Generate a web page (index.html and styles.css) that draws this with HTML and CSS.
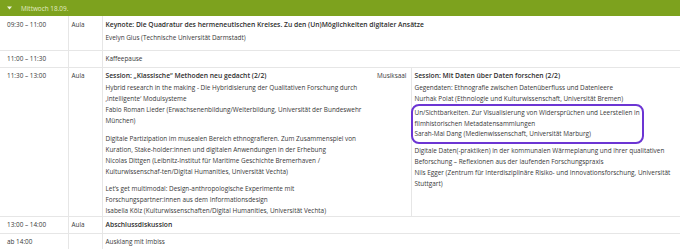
FILE: index.html
```html
<!DOCTYPE html>
<html lang="de">
<head>
<meta charset="utf-8">
<title>Programm Mittwoch</title>
<link rel="stylesheet" href="styles.css">
</head>
<body>
<div class="day">
  <div class="day-head">
    <svg class="caret" width="5" height="4" viewBox="0 0 5 4"><path d="M0 0.5H5L2.5 3.5Z" fill="#eef4dc"/></svg>
    <span>Mittwoch 18.09.</span>
  </div>
  <table class="schedule">
    <colgroup>
      <col class="c-time"><col class="c-room"><col class="c-main"><col class="c-room2"><col class="c-main2">
    </colgroup>
    <tr class="row-keynote">
      <td class="time">09:30 – 11:00</td>
      <td class="room">Aula</td>
      <td class="content" colspan="3">
        <p class="title">Keynote: Die Quadratur des hermeneutischen Kreises. Zu den (Un)Möglichkeiten digitaler Ansätze</p>
        <p class="talk">Evelyn Gius (Technische Universität Darmstadt)</p>
      </td>
    </tr>
    <tr class="row-simple">
      <td class="time">11:00 – 11:30</td>
      <td class="room"></td>
      <td class="content" colspan="3">Kaffeepause</td>
    </tr>
    <tr class="row-session">
      <td class="time">11:30 – 13:00</td>
      <td class="room">Aula</td>
      <td class="content">
        <p class="title">Session: „Klassische“ Methoden neu gedacht (2/2)</p>
        <p class="talk">Hybrid research in the making - Die Hybridisierung der Qualitativen Forschung durch<br>‚intelligente‘ Modulsysteme<br>Fabio Roman Lieder (Erwachsenenbildung/Weiterbildung, Universität der Bundeswehr<br>München)</p>
        <p class="talk">Digitale Partizipation im musealen Bereich ethnografieren. Zum Zusammenspiel von<br>Kuration, Stake-holder:innen und digitalen Anwendungen in der Erhebung<br>Nicolas Dittgen (Leibnitz-Institut für Maritime Geschichte Bremerhaven /<br>Kulturwissenschaf-ten/Digital Humanities, Universität Vechta)</p>
        <p class="talk last">Let’s get multimodal: Design-anthropologische Experimente mit<br>Forschungspartner:innen aus dem Informationsdesign<br>Isabella Kölz (Kulturwissenschaften/Digital Humanities, Universität Vechta)</p>
      </td>
      <td class="room room2">Musiksaal</td>
      <td class="content content2">
        <p class="title">Session: Mit Daten über Daten forschen (2/2)</p>
        <p class="talk">Gegendaten: Ethnografie zwischen Datenüberfluss und Datenleere<br>Nurhak Polat (Ethnologie und Kulturwissenschaft, Universität Bremen)</p>
        <p class="talk marked">Un/Sichtbarkeiten. Zur Visualisierung von Widersprüchen und Leerstellen in<br>filmhistorischen Metadatensammlungen<br>Sarah-Mai Dang (Medienwissenschaft, Universität Marburg)</p>
        <p class="talk">Digitale Daten(-praktiken) in der kommunalen Wärmeplanung und ihrer qualitativen<br>Beforschung – Reflexionen aus der laufenden Forschungspraxis<br>Nils Egger (Zentrum für Interdisziplinäre Risiko- und Innovationsforschung, Universität<br>Stuttgart)</p>
      </td>
    </tr>
    <tr class="row-simple">
      <td class="time">13:00 – 14:00</td>
      <td class="room">Aula</td>
      <td class="content strong" colspan="3">Abschlussdiskussion</td>
    </tr>
    <tr class="row-simple">
      <td class="time">ab 14:00</td>
      <td class="room"></td>
      <td class="content" colspan="3">Ausklang mit Imbiss</td>
    </tr>
  </table>
</div>
</body>
</html>
```
FILE: styles.css
```css
html, body {
  margin: 0;
  padding: 0;
  background: #ffffff;
}
body {
  font-family: "Open Sans", "Noto Sans", sans-serif;
  font-size: 6.4px;
  line-height: 11px;
  color: #383838;
  width: 680px;
}
.day-head {
  height: 16px;
  background: #7da21e;
  color: #e2ecc4;
  display: flex;
  align-items: center;
  padding-left: 7px;
  box-sizing: border-box;
}
.caret {
  margin-right: 9px;
}
.schedule {
  width: 680px;
  border-collapse: collapse;
  table-layout: fixed;
}
.c-time { width: 68px; }
.c-room { width: 34px; }
.c-main { width: 274px; }
.c-room2 { width: 35px; }
.c-main2 { width: 269px; }
.schedule td {
  vertical-align: top;
  border-bottom: 1px solid #e6e6e6;
  padding: 2px 3px 3px 3px;
  white-space: nowrap;
}
.schedule td.time {
  padding-left: 7px;
  border-right: 1px solid #e6e6e6;
}
.schedule td.room {
  border-right: 1px solid #e6e6e6;
}
.schedule td.room2 {
  padding-left: 1px;
}
.row-keynote td {
  padding-top: 3px;
  padding-bottom: 1px;
}
.row-session td {
  padding-top: 2px;
  padding-bottom: 0;
}
p {
  margin: 0;
}
.title,
.strong {
  font-weight: 600;
  font-size: 6.75px;
  color: #2e2e2e;
}
.title {
  margin-bottom: 1px;
}
.row-keynote .title {
  margin-bottom: 2px;
}
.talk {
  margin-bottom: 6.5px;
}
.row-keynote .talk {
  margin-bottom: 6px;
}
.talk.last {
  margin-bottom: 0;
}
.content2 .talk {
  margin-bottom: 6px;
}
.content2 .talk.marked {
  width: fit-content;
  outline: 2px solid #6c35d3;
  outline-offset: 2px;
  border-radius: 4px;
  margin-top: -2px;
  margin-bottom: 5px;
  line-height: 10.5px;
}
```
